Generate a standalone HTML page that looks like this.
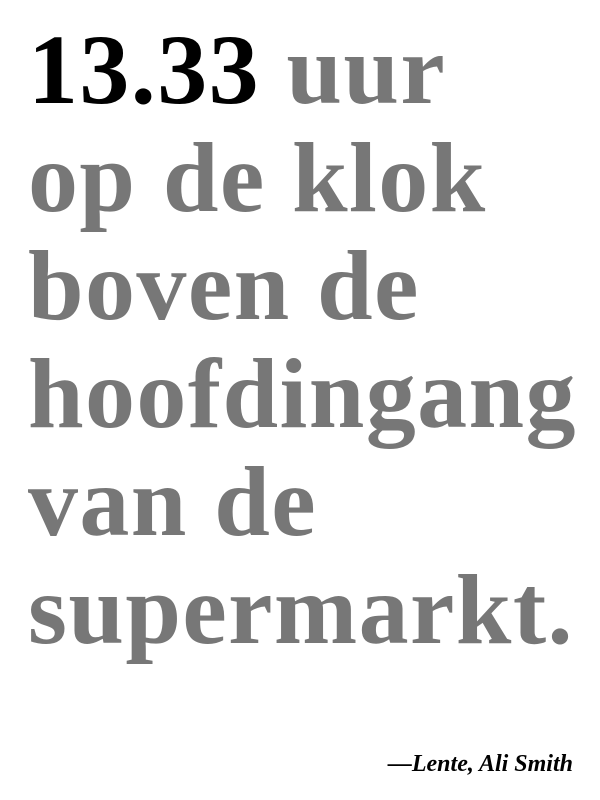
<!DOCTYPE html>
<html><head><meta charset="utf-8"><style>
html,body{margin:0;padding:0;background:#fff;width:600px;height:800px;overflow:hidden}
.q{position:absolute;left:28px;top:16px;width:590px;font-family:"Liberation Serif",serif;font-weight:bold;font-size:100px;line-height:108px;color:#777;letter-spacing:1.4px}
.q b{color:#000}
.a{position:absolute;right:27px;top:751px;font-family:"Liberation Serif",serif;font-weight:bold;font-style:italic;font-size:24px;color:#000}
</style></head><body>
<div class="q"><b>13.33</b> uur<br>op de klok<br>boven de<br>hoofdingang<br>van de<br>supermarkt.</div>
<div class="a">—Lente, Ali Smith</div>
</body></html>
